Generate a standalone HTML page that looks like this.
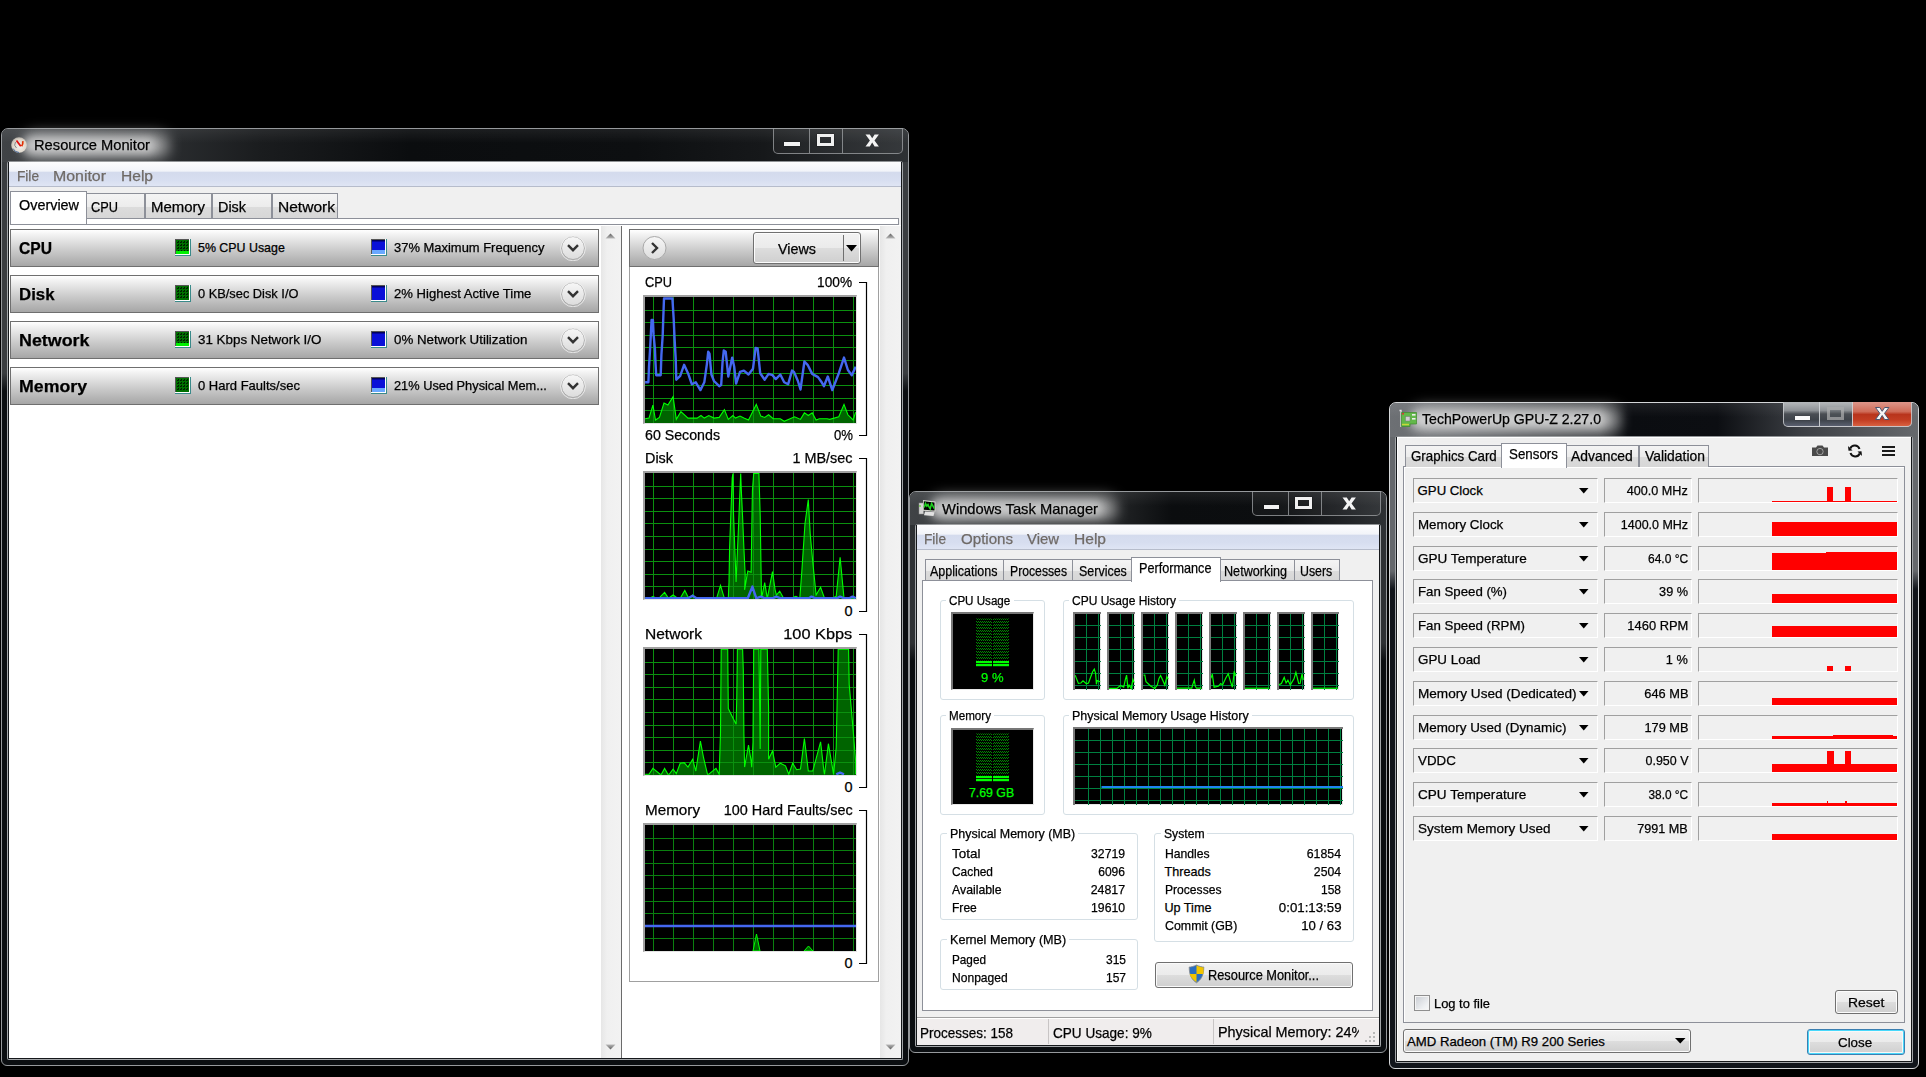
<!DOCTYPE html><html><head><meta charset="utf-8"><style>
html,body{margin:0;padding:0;background:#000;width:1926px;height:1077px;overflow:hidden;position:relative;font-family:"Liberation Sans",sans-serif}
body>div,body>span,body>svg{position:absolute;box-sizing:border-box}
.t{position:absolute;line-height:1;white-space:pre;-webkit-text-stroke:0.25px currentColor}
</style></head><body><div style="left:1px;top:128px;width:908px;height:938px;border:1px solid #96999c;border-radius:7px 7px 6px 6px;background:linear-gradient(180deg,#3a3d40 0px,#3a3d40 244px,#0b0e11 262px,#0b0e11 100%)"></div>
<div style="left:2px;top:129px;width:906px;height:33px;border-radius:6px 6px 0 0;background:linear-gradient(90deg,#404346 0px,#383b3e 80px,#1a1c1e 260px,#0b0d0f 45%,#0d0f11 70%,#16181a 84%,#2e3134 100%)"></div>
<div style="left:2px;top:129px;width:906px;height:33px;border-radius:6px 6px 0 0;background:linear-gradient(180deg,rgba(255,255,255,.07) 0px,rgba(0,0,0,0) 14px,rgba(0,0,0,0) 100%)"></div>
<div style="left:7px;top:161px;width:896px;height:899px;border:1px solid #a3a6a9;border-top-color:#909396;border-radius:3px 3px 2px 2px"></div>
<div style="left:8px;top:162px;width:894px;height:897px;border:1px solid #15181b;border-top:none;background:#f0f0f0"></div>
<div style="left:23px;top:133px;width:146px;height:25px;border-radius:12px;background:rgba(225,225,225,.62);filter:blur(7px)"></div>
<div style="left:23px;top:137px;width:132px;height:17px;border-radius:8px;background:rgba(235,235,235,.55);filter:blur(4px)"></div>
<svg style="position:absolute;left:10px;top:136px;" width="18" height="18" viewBox="0 0 18 18"><defs><radialGradient id="rmg" cx="55%" cy="60%" r="60%"><stop offset="0" stop-color="#f4f2ee"/><stop offset=".75" stop-color="#ddd5c8"/><stop offset="1" stop-color="#b9b4ac"/></radialGradient></defs><circle cx="9" cy="9" r="7.8" fill="url(#rmg)"/><path d="M3 12.5 A7 7 0 0 0 9 16.5" fill="none" stroke="#4a6a9a" stroke-width="1"/><path d="M5.5 6 A4.5 4.5 0 0 0 6.5 12" fill="none" stroke="#8a8a8a" stroke-width="1"/><path d="M6.5 4.5 L10.8 10.2" stroke="#e01010" stroke-width="1.8"/><path d="M12.8 5.2 Q13.2 8 11.6 10.2" fill="none" stroke="#e03000" stroke-width="1.7"/></svg>
<span class="t" style="left:34px;top:138.23px;font-size:14.5px;color:#000;transform:scaleX(1.0137);transform-origin:0 0;">Resource Monitor</span>
<div style="left:773px;top:128px;width:130px;height:26px;border:1px solid rgba(160,163,166,.75);border-top:none;border-radius:0 0 5px 5px;background:rgba(255,255,255,.04)"></div>
<div style="left:809px;top:128px;width:1px;height:25px;background:rgba(160,163,166,.75)"></div>
<div style="left:842px;top:128px;width:1px;height:25px;background:rgba(160,163,166,.75)"></div>
<div style="left:784px;top:142px;width:16px;height:4px;background:#f2f2f2;box-shadow:0 0 1px #000"></div>
<div style="left:817px;top:134px;width:17px;height:12px;border:3px solid #f0f0f0;border-top-width:3px;box-shadow:0 0 1px #000"></div>
<svg style="position:absolute;left:865px;top:134px;" width="15" height="14" viewBox="0 0 15 14"><path d="M0.5 0.5 H4.8 L7.2 4.3 L9.6 0.5 H13.9 L9.5 6.4 L13.9 12.5 H9.6 L7.2 8.5 L4.8 12.5 H0.5 L4.9 6.4 Z" fill="#f4f4f4"/></svg>
<div style="left:9px;top:162px;width:892px;height:25px;background:linear-gradient(180deg,#fdfdfe 0px,#f2f4f9 9px,#d4dbed 10.5px,#d7def0 18px,#dfe5f4 24px)"></div>
<div style="left:9px;top:186px;width:892px;height:1px;background:#b6bccb"></div>
<span class="t" style="left:16.5px;top:168.73px;font-size:14.5px;color:#6f6a66;transform:scaleX(0.9416);transform-origin:0 0;">File</span>
<span class="t" style="left:53px;top:168.73px;font-size:14.5px;color:#6f6a66;transform:scaleX(1.0962);transform-origin:0 0;">Monitor</span>
<span class="t" style="left:120.5px;top:168.73px;font-size:14.5px;color:#6f6a66;transform:scaleX(1.0731);transform-origin:0 0;">Help</span>
<div style="left:86px;top:193px;width:59px;height:26px;border:1px solid #8d9099;border-bottom:none;background:linear-gradient(180deg,#f4f4f4 0,#ececec 50%,#dcdcdc 51%,#d6d6d6 100%)"></div>
<div style="left:145px;top:193px;width:67px;height:26px;border:1px solid #8d9099;border-bottom:none;background:linear-gradient(180deg,#f4f4f4 0,#ececec 50%,#dcdcdc 51%,#d6d6d6 100%)"></div>
<div style="left:212px;top:193px;width:60px;height:26px;border:1px solid #8d9099;border-bottom:none;background:linear-gradient(180deg,#f4f4f4 0,#ececec 50%,#dcdcdc 51%,#d6d6d6 100%)"></div>
<div style="left:272px;top:193px;width:66px;height:26px;border:1px solid #8d9099;border-bottom:none;background:linear-gradient(180deg,#f4f4f4 0,#ececec 50%,#dcdcdc 51%,#d6d6d6 100%)"></div>
<div style="left:10px;top:218px;width:889px;height:7px;border:1px solid #8d9099;background:#fff"></div>
<div style="left:10px;top:191px;width:77px;height:33px;border:1px solid #8d9099;border-bottom:none;background:#fff"></div>
<span class="t" style="left:18.5px;top:197.73px;font-size:14.5px;color:#000;transform:scaleX(0.9929);transform-origin:0 0;">Overview</span>
<span class="t" style="left:91px;top:199.73px;font-size:14.5px;color:#000;transform:scaleX(0.8820);transform-origin:0 0;">CPU</span>
<span class="t" style="left:151px;top:199.73px;font-size:14.5px;color:#000;transform:scaleX(1.0312);transform-origin:0 0;">Memory</span>
<span class="t" style="left:218px;top:199.73px;font-size:14.5px;color:#000;transform:scaleX(0.9932);transform-origin:0 0;">Disk</span>
<span class="t" style="left:277.5px;top:199.73px;font-size:14.5px;color:#000;transform:scaleX(1.0719);transform-origin:0 0;">Network</span>
<div style="left:9px;top:225px;width:892px;height:833px;background:#fff"></div>
<div style="left:601px;top:226px;width:20px;height:832px;background:linear-gradient(90deg,#e6e6e6 0,#f0f0f0 30%,#f2f2f2 100%)"></div>
<div style="left:621px;top:226px;width:1px;height:832px;background:#6b6b6b"></div>
<div style="left:880px;top:226px;width:21px;height:832px;background:linear-gradient(90deg,#e6e6e6 0,#f0f0f0 30%,#f2f2f2 100%)"></div>
<svg style="position:absolute;left:605px;top:233px;" width="11" height="6" viewBox="0 0 11 6"><defs><linearGradient id="ua" x1="0" y1="0" x2="0" y2="1"><stop offset="0" stop-color="#606060"/><stop offset="1" stop-color="#b8b8b8"/></linearGradient></defs><path d="M0.5 5.5 L5.5 0.5 L10.5 5.5 Z" fill="url(#ua)"/></svg>
<svg style="position:absolute;left:605px;top:1044px;" width="11" height="6" viewBox="0 0 11 6"><defs><linearGradient id="da" x1="0" y1="0" x2="0" y2="1"><stop offset="0" stop-color="#b8b8b8"/><stop offset="1" stop-color="#606060"/></linearGradient></defs><path d="M0.5 0.5 L5.5 5.5 L10.5 0.5 Z" fill="url(#da)"/></svg>
<svg style="position:absolute;left:885px;top:233px;" width="11" height="6" viewBox="0 0 11 6"><defs><linearGradient id="ua" x1="0" y1="0" x2="0" y2="1"><stop offset="0" stop-color="#606060"/><stop offset="1" stop-color="#b8b8b8"/></linearGradient></defs><path d="M0.5 5.5 L5.5 0.5 L10.5 5.5 Z" fill="url(#ua)"/></svg>
<svg style="position:absolute;left:885px;top:1044px;" width="11" height="6" viewBox="0 0 11 6"><defs><linearGradient id="da" x1="0" y1="0" x2="0" y2="1"><stop offset="0" stop-color="#b8b8b8"/><stop offset="1" stop-color="#606060"/></linearGradient></defs><path d="M0.5 0.5 L5.5 5.5 L10.5 0.5 Z" fill="url(#da)"/></svg>
<div style="left:10px;top:229px;width:589px;height:38px;border:1px solid #6f6f6f;background:linear-gradient(180deg,#ffffff 0px,#f4f4f4 4px,#c8c8c8 60%,#a6a6a6 100%)"></div>
<span class="t" style="left:18.5px;top:239.83px;font-size:16.5px;color:#000;font-weight:bold;transform:scaleX(0.9473);transform-origin:0 0;">CPU</span>
<svg style="position:absolute;left:175px;top:239px;" width="16" height="17" viewBox="0 0 16 17"><rect x="0" y="0" width="16" height="17" fill="#3a8a8a"/><rect x="0" y="0" width="15" height="16" fill="#fff"/><rect x="0" y="0" width="14" height="15" fill="#555"/><svg x="1" y="1" width="13" height="14"><rect width="13" height="14" fill="#007000"/><path d="M1 2.5H13" stroke="#001a00" stroke-width="1" stroke-dasharray="1.5 1.5"/><path d="M1 5.5H13" stroke="#001a00" stroke-width="1" stroke-dasharray="1.5 1.5"/><path d="M1 8.5H13" stroke="#001a00" stroke-width="1" stroke-dasharray="1.5 1.5"/><path d="M1 11.5H13" stroke="#001a00" stroke-width="1" stroke-dasharray="1.5 1.5"/><path d="M2.5 1V13" stroke="#001a00" stroke-width="1" stroke-dasharray="1.5 1.5"/><path d="M5.5 1V13" stroke="#001a00" stroke-width="1" stroke-dasharray="1.5 1.5"/><path d="M8.5 1V13" stroke="#001a00" stroke-width="1" stroke-dasharray="1.5 1.5"/><path d="M11.5 1V13" stroke="#001a00" stroke-width="1" stroke-dasharray="1.5 1.5"/><rect x="0" y="11" width="13" height="3" fill="#00f000"/></svg></svg>
<svg style="position:absolute;left:371px;top:239px;" width="16" height="17" viewBox="0 0 16 17"><rect x="0" y="0" width="16" height="17" fill="#3a8a8a"/><rect x="0" y="0" width="15" height="16" fill="#fff"/><rect x="0" y="0" width="14" height="15" fill="#555"/><svg x="1" y="1" width="13" height="14"><rect width="13" height="14" fill="#0a10d8"/><rect x="0" y="0" width="13" height="1.5" fill="#000060"/><rect x="0" y="10" width="13" height="4" fill="#6aa8ff"/></svg></svg>
<span class="t" style="left:198px;top:242.10px;font-size:12.4px;color:#000;transform-origin:0 0;">5% CPU Usage</span>
<span class="t" style="left:393.5px;top:242.10px;font-size:12.4px;color:#000;transform:scaleX(1.0449);transform-origin:0 0;">37% Maximum Frequency</span>
<svg style="position:absolute;left:560px;top:235px;" width="26" height="26" viewBox="0 0 26 26"><defs><linearGradient id="chg0" x1="0" y1="0" x2="0" y2="1"><stop offset="0" stop-color="#f7f7f7"/><stop offset="1" stop-color="#dcdcdc"/></linearGradient></defs><circle cx="13" cy="13" r="11.5" fill="url(#chg0)" stroke="#a9a9a9" stroke-width="1"/><circle cx="13" cy="13.5" r="12.3" fill="none" stroke="#fff" stroke-width=".8" opacity=".8"/><path d="M8 10.2 L13 15.2 L18 10.2" fill="none" stroke="#333" stroke-width="2.4"/></svg>
<div style="left:10px;top:275px;width:589px;height:38px;border:1px solid #6f6f6f;background:linear-gradient(180deg,#ffffff 0px,#f4f4f4 4px,#c8c8c8 60%,#a6a6a6 100%)"></div>
<span class="t" style="left:18.5px;top:285.83px;font-size:16.5px;color:#000;font-weight:bold;transform:scaleX(1.0186);transform-origin:0 0;">Disk</span>
<svg style="position:absolute;left:175px;top:285px;" width="16" height="17" viewBox="0 0 16 17"><rect x="0" y="0" width="16" height="17" fill="#3a8a8a"/><rect x="0" y="0" width="15" height="16" fill="#fff"/><rect x="0" y="0" width="14" height="15" fill="#555"/><svg x="1" y="1" width="13" height="14"><rect width="13" height="14" fill="#007000"/><path d="M1 2.5H13" stroke="#001a00" stroke-width="1" stroke-dasharray="1.5 1.5"/><path d="M1 5.5H13" stroke="#001a00" stroke-width="1" stroke-dasharray="1.5 1.5"/><path d="M1 8.5H13" stroke="#001a00" stroke-width="1" stroke-dasharray="1.5 1.5"/><path d="M1 11.5H13" stroke="#001a00" stroke-width="1" stroke-dasharray="1.5 1.5"/><path d="M2.5 1V13" stroke="#001a00" stroke-width="1" stroke-dasharray="1.5 1.5"/><path d="M5.5 1V13" stroke="#001a00" stroke-width="1" stroke-dasharray="1.5 1.5"/><path d="M8.5 1V13" stroke="#001a00" stroke-width="1" stroke-dasharray="1.5 1.5"/><path d="M11.5 1V13" stroke="#001a00" stroke-width="1" stroke-dasharray="1.5 1.5"/></svg></svg>
<svg style="position:absolute;left:371px;top:285px;" width="16" height="17" viewBox="0 0 16 17"><rect x="0" y="0" width="16" height="17" fill="#3a8a8a"/><rect x="0" y="0" width="15" height="16" fill="#fff"/><rect x="0" y="0" width="14" height="15" fill="#555"/><svg x="1" y="1" width="13" height="14"><rect width="13" height="14" fill="#0a10d8"/><rect x="0" y="0" width="13" height="1.5" fill="#000060"/></svg></svg>
<span class="t" style="left:198px;top:288.10px;font-size:12.4px;color:#000;transform:scaleX(1.0344);transform-origin:0 0;">0 KB/sec Disk I/O</span>
<span class="t" style="left:393.5px;top:288.10px;font-size:12.4px;color:#000;transform:scaleX(1.0556);transform-origin:0 0;">2% Highest Active Time</span>
<svg style="position:absolute;left:560px;top:281px;" width="26" height="26" viewBox="0 0 26 26"><defs><linearGradient id="chg1" x1="0" y1="0" x2="0" y2="1"><stop offset="0" stop-color="#f7f7f7"/><stop offset="1" stop-color="#dcdcdc"/></linearGradient></defs><circle cx="13" cy="13" r="11.5" fill="url(#chg1)" stroke="#a9a9a9" stroke-width="1"/><circle cx="13" cy="13.5" r="12.3" fill="none" stroke="#fff" stroke-width=".8" opacity=".8"/><path d="M8 10.2 L13 15.2 L18 10.2" fill="none" stroke="#333" stroke-width="2.4"/></svg>
<div style="left:10px;top:321px;width:589px;height:38px;border:1px solid #6f6f6f;background:linear-gradient(180deg,#ffffff 0px,#f4f4f4 4px,#c8c8c8 60%,#a6a6a6 100%)"></div>
<span class="t" style="left:18.5px;top:331.83px;font-size:16.5px;color:#000;font-weight:bold;transform:scaleX(1.0830);transform-origin:0 0;">Network</span>
<svg style="position:absolute;left:175px;top:331px;" width="16" height="17" viewBox="0 0 16 17"><rect x="0" y="0" width="16" height="17" fill="#3a8a8a"/><rect x="0" y="0" width="15" height="16" fill="#fff"/><rect x="0" y="0" width="14" height="15" fill="#555"/><svg x="1" y="1" width="13" height="14"><rect width="13" height="14" fill="#007000"/><path d="M1 2.5H13" stroke="#001a00" stroke-width="1" stroke-dasharray="1.5 1.5"/><path d="M1 5.5H13" stroke="#001a00" stroke-width="1" stroke-dasharray="1.5 1.5"/><path d="M1 8.5H13" stroke="#001a00" stroke-width="1" stroke-dasharray="1.5 1.5"/><path d="M1 11.5H13" stroke="#001a00" stroke-width="1" stroke-dasharray="1.5 1.5"/><path d="M2.5 1V13" stroke="#001a00" stroke-width="1" stroke-dasharray="1.5 1.5"/><path d="M5.5 1V13" stroke="#001a00" stroke-width="1" stroke-dasharray="1.5 1.5"/><path d="M8.5 1V13" stroke="#001a00" stroke-width="1" stroke-dasharray="1.5 1.5"/><path d="M11.5 1V13" stroke="#001a00" stroke-width="1" stroke-dasharray="1.5 1.5"/><rect x="0" y="11" width="13" height="3" fill="#00f000"/></svg></svg>
<svg style="position:absolute;left:371px;top:331px;" width="16" height="17" viewBox="0 0 16 17"><rect x="0" y="0" width="16" height="17" fill="#3a8a8a"/><rect x="0" y="0" width="15" height="16" fill="#fff"/><rect x="0" y="0" width="14" height="15" fill="#555"/><svg x="1" y="1" width="13" height="14"><rect width="13" height="14" fill="#0a10d8"/><rect x="0" y="0" width="13" height="1.5" fill="#000060"/></svg></svg>
<span class="t" style="left:198px;top:334.10px;font-size:12.4px;color:#000;transform:scaleX(1.0795);transform-origin:0 0;">31 Kbps Network I/O</span>
<span class="t" style="left:393.5px;top:334.10px;font-size:12.4px;color:#000;transform:scaleX(1.0763);transform-origin:0 0;">0% Network Utilization</span>
<svg style="position:absolute;left:560px;top:327px;" width="26" height="26" viewBox="0 0 26 26"><defs><linearGradient id="chg2" x1="0" y1="0" x2="0" y2="1"><stop offset="0" stop-color="#f7f7f7"/><stop offset="1" stop-color="#dcdcdc"/></linearGradient></defs><circle cx="13" cy="13" r="11.5" fill="url(#chg2)" stroke="#a9a9a9" stroke-width="1"/><circle cx="13" cy="13.5" r="12.3" fill="none" stroke="#fff" stroke-width=".8" opacity=".8"/><path d="M8 10.2 L13 15.2 L18 10.2" fill="none" stroke="#333" stroke-width="2.4"/></svg>
<div style="left:10px;top:367px;width:589px;height:38px;border:1px solid #6f6f6f;background:linear-gradient(180deg,#ffffff 0px,#f4f4f4 4px,#c8c8c8 60%,#a6a6a6 100%)"></div>
<span class="t" style="left:18.5px;top:377.83px;font-size:16.5px;color:#000;font-weight:bold;transform:scaleX(1.0748);transform-origin:0 0;">Memory</span>
<svg style="position:absolute;left:175px;top:377px;" width="16" height="17" viewBox="0 0 16 17"><rect x="0" y="0" width="16" height="17" fill="#3a8a8a"/><rect x="0" y="0" width="15" height="16" fill="#fff"/><rect x="0" y="0" width="14" height="15" fill="#555"/><svg x="1" y="1" width="13" height="14"><rect width="13" height="14" fill="#007000"/><path d="M1 2.5H13" stroke="#001a00" stroke-width="1" stroke-dasharray="1.5 1.5"/><path d="M1 5.5H13" stroke="#001a00" stroke-width="1" stroke-dasharray="1.5 1.5"/><path d="M1 8.5H13" stroke="#001a00" stroke-width="1" stroke-dasharray="1.5 1.5"/><path d="M1 11.5H13" stroke="#001a00" stroke-width="1" stroke-dasharray="1.5 1.5"/><path d="M2.5 1V13" stroke="#001a00" stroke-width="1" stroke-dasharray="1.5 1.5"/><path d="M5.5 1V13" stroke="#001a00" stroke-width="1" stroke-dasharray="1.5 1.5"/><path d="M8.5 1V13" stroke="#001a00" stroke-width="1" stroke-dasharray="1.5 1.5"/><path d="M11.5 1V13" stroke="#001a00" stroke-width="1" stroke-dasharray="1.5 1.5"/></svg></svg>
<svg style="position:absolute;left:371px;top:377px;" width="16" height="17" viewBox="0 0 16 17"><rect x="0" y="0" width="16" height="17" fill="#3a8a8a"/><rect x="0" y="0" width="15" height="16" fill="#fff"/><rect x="0" y="0" width="14" height="15" fill="#555"/><svg x="1" y="1" width="13" height="14"><rect width="13" height="14" fill="#0a10d8"/><rect x="0" y="0" width="13" height="1.5" fill="#000060"/><rect x="0" y="10" width="13" height="4" fill="#6aa8ff"/></svg></svg>
<span class="t" style="left:198px;top:380.10px;font-size:12.4px;color:#000;transform:scaleX(1.0497);transform-origin:0 0;">0 Hard Faults/sec</span>
<span class="t" style="left:393.5px;top:380.10px;font-size:12.4px;color:#000;transform:scaleX(1.0326);transform-origin:0 0;">21% Used Physical Mem...</span>
<svg style="position:absolute;left:560px;top:373px;" width="26" height="26" viewBox="0 0 26 26"><defs><linearGradient id="chg3" x1="0" y1="0" x2="0" y2="1"><stop offset="0" stop-color="#f7f7f7"/><stop offset="1" stop-color="#dcdcdc"/></linearGradient></defs><circle cx="13" cy="13" r="11.5" fill="url(#chg3)" stroke="#a9a9a9" stroke-width="1"/><circle cx="13" cy="13.5" r="12.3" fill="none" stroke="#fff" stroke-width=".8" opacity=".8"/><path d="M8 10.2 L13 15.2 L18 10.2" fill="none" stroke="#333" stroke-width="2.4"/></svg>
<div style="left:629px;top:229px;width:250px;height:38px;border:1px solid #6f6f6f;background:linear-gradient(180deg,#ffffff 0px,#f4f4f4 4px,#c8c8c8 60%,#a6a6a6 100%)"></div>
<svg style="position:absolute;left:641px;top:235px;" width="27" height="27" viewBox="0 0 27 27"><defs><linearGradient id="chx" x1="0" y1="0" x2="0" y2="1"><stop offset="0" stop-color="#f7f7f7"/><stop offset="1" stop-color="#dcdcdc"/></linearGradient></defs><circle cx="13.5" cy="13" r="11.5" fill="url(#chx)" stroke="#a9a9a9"/><path d="M11 8 L16 13 L11 18" fill="none" stroke="#333" stroke-width="2.4"/></svg>
<div style="left:753px;top:232px;width:108px;height:32px;border:1px solid #707070;border-radius:3px;background:linear-gradient(180deg,#f2f2f2 0,#ebebeb 50%,#dddddd 51%,#cfcfcf 100%);box-shadow:inset 0 0 0 1px #fcfcfc"></div>
<div style="left:843px;top:235px;width:1px;height:26px;background:#6f6f6f"></div>
<span class="t" style="left:778px;top:241.73px;font-size:14.5px;color:#000;transform:scaleX(0.9892);transform-origin:0 0;">Views</span>
<svg style="position:absolute;left:846px;top:245px;" width="12" height="7" viewBox="0 0 12 7"><path d="M0 0 H11 L5.5 6.5 Z" fill="#000"/></svg>
<div style="left:629px;top:267px;width:250px;height:715px;border:1px solid #a0a0a0;border-top:none;background:#fff"></div>
<span class="t" style="left:645px;top:275.43px;font-size:14.5px;color:#000;transform:scaleX(0.8820);transform-origin:0 0;">CPU</span>
<span class="t" style="right:1073.5px;top:275.43px;font-size:14.5px;color:#000;transform:scaleX(0.9438);transform-origin:100% 0;">100%</span>
<span class="t" style="left:645px;top:428.13px;font-size:14.5px;color:#000;transform:scaleX(0.9793);transform-origin:0 0;">60 Seconds</span>
<span class="t" style="right:1073.5px;top:428.13px;font-size:14.5px;color:#000;transform:scaleX(0.9066);transform-origin:100% 0;">0%</span>
<svg style="position:absolute;left:858px;top:281px;" width="10" height="160" viewBox="0 0 10 160"><path d="M1 1.5 H8.5 V154.5 H1" fill="none" stroke="#000" stroke-width="1.2"/></svg>
<div style="left:643px;top:295px;width:214px;height:129px;border-top:2px solid #a0a0a0;border-left:2px solid #a0a0a0;border-right:1px solid #e4e4e4;border-bottom:1px solid #e4e4e4;background:#000"></div>
<svg style="position:absolute;left:645px;top:297px;" width="211" height="126" viewBox="0 0 211 126"><path d="M8.5 0V126M28.5 0V126M48.5 0V126M68.5 0V126M88.5 0V126M108.5 0V126M128.5 0V126M148.5 0V126M168.5 0V126M188.5 0V126M208.5 0V126M0 13.5H211M0 25.5H211M0 38.5H211M0 50.5H211M0 63.5H211M0 76.5H211M0 88.5H211M0 101.5H211M0 113.5H211" stroke="#0a800f" stroke-width="1" fill="none" shape-rendering="crispEdges"/><polygon points="0.1,126.0 0.1,121.7 4.0,121.1 7.9,108.1 10.5,123.0 14.4,120.4 19.0,106.1 22.9,108.1 28.1,99.6 31.3,122.4 35.9,114.6 43.0,121.1 52.1,121.1 56.0,118.5 59.3,121.1 63.8,118.5 69.0,121.1 74.2,120.4 79.4,112.6 83.3,122.4 87.9,118.5 90.5,121.1 95.0,119.1 98.9,121.1 103.5,123.0 111.3,107.4 115.8,119.1 119.7,120.4 123.6,117.8 128.2,121.7 135.3,121.7 139.2,124.3 149.6,119.8 155.5,122.4 159.4,115.9 163.3,118.5 167.2,115.9 171.1,123.0 174.3,121.7 182.1,121.7 184.7,122.4 193.8,119.8 199.0,107.4 202.9,117.8 208.1,123.0 210.7,115.2 210.7,126.0" fill="#006400"/><path d="M8.5 0V126M28.5 0V126M48.5 0V126M68.5 0V126M88.5 0V126M108.5 0V126M128.5 0V126M148.5 0V126M168.5 0V126M188.5 0V126M208.5 0V126M0 13.5H211M0 25.5H211M0 38.5H211M0 50.5H211M0 63.5H211M0 76.5H211M0 88.5H211M0 101.5H211M0 113.5H211" stroke="#0b900f" stroke-width="1" fill="none" shape-rendering="crispEdges"/><polyline points="0.1,121.7 4.0,121.1 7.9,108.1 10.5,123.0 14.4,120.4 19.0,106.1 22.9,108.1 28.1,99.6 31.3,122.4 35.9,114.6 43.0,121.1 52.1,121.1 56.0,118.5 59.3,121.1 63.8,118.5 69.0,121.1 74.2,120.4 79.4,112.6 83.3,122.4 87.9,118.5 90.5,121.1 95.0,119.1 98.9,121.1 103.5,123.0 111.3,107.4 115.8,119.1 119.7,120.4 123.6,117.8 128.2,121.7 135.3,121.7 139.2,124.3 149.6,119.8 155.5,122.4 159.4,115.9 163.3,118.5 167.2,115.9 171.1,123.0 174.3,121.7 182.1,121.7 184.7,122.4 193.8,119.8 199.0,107.4 202.9,117.8 208.1,123.0 210.7,115.2" fill="none" stroke="#00ff00" stroke-width="1.1"/><polyline points="0.1,85.3 3.4,85.3 4.0,69.7 5.0,53.5 6.6,22.9 7.9,22.9 8.6,37.9 9.9,51.5 10.5,65.8 11.2,78.2 15.7,78.2 16.4,58.0 17.7,38.5 18.3,20.3 19.0,1.5 27.4,1.5 28.7,22.3 29.6,42.4 30.7,61.9 31.3,82.7 35.2,78.8 39.1,67.8 43.0,76.2 46.9,87.3 50.8,85.3 55.4,93.1 59.3,85.3 61.9,67.1 63.2,54.8 64.5,56.7 66.4,77.5 69.0,84.0 74.2,89.2 76.2,87.9 77.5,65.8 78.8,53.5 80.7,54.8 83.3,79.5 87.2,60.6 89.2,69.7 91.1,86.6 95.0,74.9 98.9,73.6 103.5,77.5 108.0,71.7 110.6,50.9 112.6,51.5 115.2,76.2 119.7,82.7 123.6,76.9 127.5,78.2 130.8,82.1 135.3,77.5 139.2,85.3 143.1,87.3 147.0,73.6 149.0,74.9 152.9,84.0 155.5,92.5 159.4,64.5 162.6,67.8 167.2,76.9 173.0,80.1 176.3,84.7 178.9,89.2 182.8,79.5 187.3,93.1 193.8,76.2 199.0,60.6 202.9,73.0 206.8,78.2 210.7,69.7" fill="none" stroke="#4468f0" stroke-width="2.4" stroke-linejoin="round"/></svg>
<span class="t" style="left:645px;top:451.43px;font-size:14.5px;color:#000;transform:scaleX(0.9932);transform-origin:0 0;">Disk</span>
<span class="t" style="right:1073.5px;top:451.43px;font-size:14.5px;color:#000;transform:scaleX(0.9928);transform-origin:100% 0;">1 MB/sec</span>
<span class="t" style="right:1073.5px;top:604.13px;font-size:14.5px;color:#000;transform-origin:100% 0;">0</span>
<svg style="position:absolute;left:858px;top:457px;" width="10" height="160" viewBox="0 0 10 160"><path d="M1 1.5 H8.5 V154.5 H1" fill="none" stroke="#000" stroke-width="1.2"/></svg>
<div style="left:643px;top:471px;width:214px;height:129px;border-top:2px solid #a0a0a0;border-left:2px solid #a0a0a0;border-right:1px solid #e4e4e4;border-bottom:1px solid #e4e4e4;background:#000"></div>
<svg style="position:absolute;left:645px;top:473px;" width="211" height="126" viewBox="0 0 211 126"><path d="M8.5 0V126M28.5 0V126M48.5 0V126M68.5 0V126M88.5 0V126M108.5 0V126M128.5 0V126M148.5 0V126M168.5 0V126M188.5 0V126M208.5 0V126M0 13.5H211M0 25.5H211M0 38.5H211M0 50.5H211M0 63.5H211M0 76.5H211M0 88.5H211M0 101.5H211M0 113.5H211" stroke="#0a800f" stroke-width="1" fill="none" shape-rendering="crispEdges"/><polygon points="0.1,126.0 0.1,125.3 4.0,125.3 7.9,123.6 11.8,125.3 13.8,125.3 19.6,119.4 23.5,125.3 28.1,122.0 32.6,125.3 35.2,125.3 39.8,117.5 43.7,125.3 47.6,122.0 51.5,125.3 71.6,125.3 75.5,112.3 79.4,125.3 83.3,125.3 84.0,109.0 84.6,75.2 85.9,40.1 87.2,5.0 87.9,0.5 88.5,40.1 89.8,75.2 91.1,109.0 92.4,79.1 93.7,49.2 95.0,16.7 95.7,0.5 96.3,16.7 97.6,44.0 98.9,75.2 100.2,102.5 99.6,116.8 102.8,98.0 106.1,99.3 107.4,18.0 108.7,0.5 113.9,0.5 115.2,42.7 116.5,125.3 119.7,109.7 122.3,125.3 127.5,98.6 130.1,116.8 131.4,122.0 134.7,118.1 138.6,125.3 145.7,125.3 150.9,123.3 154.8,125.3 156.8,98.6 160.0,50.5 163.3,26.5 165.2,60.9 167.2,83.0 171.1,122.0 175.6,114.2 179.5,125.3 187.3,125.3 191.2,123.3 195.1,84.3 197.7,111.6 199.0,125.3 210.7,125.3 210.7,126.0" fill="#006400"/><path d="M8.5 0V126M28.5 0V126M48.5 0V126M68.5 0V126M88.5 0V126M108.5 0V126M128.5 0V126M148.5 0V126M168.5 0V126M188.5 0V126M208.5 0V126M0 13.5H211M0 25.5H211M0 38.5H211M0 50.5H211M0 63.5H211M0 76.5H211M0 88.5H211M0 101.5H211M0 113.5H211" stroke="#0b900f" stroke-width="1" fill="none" shape-rendering="crispEdges"/><polyline points="0.1,125.3 4.0,125.3 7.9,123.6 11.8,125.3 13.8,125.3 19.6,119.4 23.5,125.3 28.1,122.0 32.6,125.3 35.2,125.3 39.8,117.5 43.7,125.3 47.6,122.0 51.5,125.3 71.6,125.3 75.5,112.3 79.4,125.3 83.3,125.3 84.0,109.0 84.6,75.2 85.9,40.1 87.2,5.0 87.9,0.5 88.5,40.1 89.8,75.2 91.1,109.0 92.4,79.1 93.7,49.2 95.0,16.7 95.7,0.5 96.3,16.7 97.6,44.0 98.9,75.2 100.2,102.5 99.6,116.8 102.8,98.0 106.1,99.3 107.4,18.0 108.7,0.5 113.9,0.5 115.2,42.7 116.5,125.3 119.7,109.7 122.3,125.3 127.5,98.6 130.1,116.8 131.4,122.0 134.7,118.1 138.6,125.3 145.7,125.3 150.9,123.3 154.8,125.3 156.8,98.6 160.0,50.5 163.3,26.5 165.2,60.9 167.2,83.0 171.1,122.0 175.6,114.2 179.5,125.3 187.3,125.3 191.2,123.3 195.1,84.3 197.7,111.6 199.0,125.3 210.7,125.3" fill="none" stroke="#00ff00" stroke-width="1.1"/><polyline points="0.1,125.3 43.0,125.3 47.6,122.7 51.5,125.3 102.8,125.3 107.4,113.6 111.3,125.3 115.8,123.6 119.7,125.3 127.5,125.3 131.4,123.6 135.3,125.3 163.9,125.3 166.5,123.6 170.4,125.3 191.9,125.3 195.1,123.6 199.0,125.3 204.2,125.3 207.5,123.6 210.7,125.3" fill="none" stroke="#4468f0" stroke-width="2.4" stroke-linejoin="round"/></svg>
<span class="t" style="left:645px;top:627.43px;font-size:14.5px;color:#000;transform:scaleX(1.0719);transform-origin:0 0;">Network</span>
<span class="t" style="right:1073.5px;top:627.43px;font-size:14.5px;color:#000;transform:scaleX(1.1262);transform-origin:100% 0;">100 Kbps</span>
<span class="t" style="right:1073.5px;top:780.13px;font-size:14.5px;color:#000;transform-origin:100% 0;">0</span>
<svg style="position:absolute;left:858px;top:633px;" width="10" height="160" viewBox="0 0 10 160"><path d="M1 1.5 H8.5 V154.5 H1" fill="none" stroke="#000" stroke-width="1.2"/></svg>
<div style="left:643px;top:647px;width:214px;height:129px;border-top:2px solid #a0a0a0;border-left:2px solid #a0a0a0;border-right:1px solid #e4e4e4;border-bottom:1px solid #e4e4e4;background:#000"></div>
<svg style="position:absolute;left:645px;top:649px;" width="211" height="126" viewBox="0 0 211 126"><path d="M8.5 0V126M28.5 0V126M48.5 0V126M68.5 0V126M88.5 0V126M108.5 0V126M128.5 0V126M148.5 0V126M168.5 0V126M188.5 0V126M208.5 0V126M0 13.5H211M0 25.5H211M0 38.5H211M0 50.5H211M0 63.5H211M0 76.5H211M0 88.5H211M0 101.5H211M0 113.5H211" stroke="#0a800f" stroke-width="1" fill="none" shape-rendering="crispEdges"/><polygon points="0.1,126.0 0.1,125.3 4.0,125.3 7.9,119.4 15.1,125.3 16.4,125.3 19.6,119.4 22.9,125.3 24.2,125.3 28.1,120.1 31.3,124.6 35.2,114.2 39.1,113.6 43.0,118.1 47.6,110.3 50.8,122.0 55.4,92.1 58.6,109.0 62.5,125.3 63.8,125.3 71.0,119.4 74.2,125.3 75.5,84.3 76.2,0.1 82.7,0.1 83.3,59.6 87.2,67.4 91.1,75.2 91.8,47.9 92.4,0.1 97.6,0.1 98.3,21.3 98.9,85.6 99.6,118.1 103.5,96.0 106.1,111.6 106.7,118.1 108.0,93.4 108.7,0.1 113.9,0.1 114.5,44.0 115.2,99.9 115.8,0.1 122.3,0.1 123.6,59.6 123.6,110.3 127.5,101.9 130.8,118.1 135.3,114.2 140.5,116.8 143.8,125.3 147.7,114.2 151.6,120.7 155.5,120.1 159.4,89.5 163.3,122.0 167.8,122.0 175.6,92.8 178.9,122.0 179.5,125.3 183.4,94.7 188.6,125.3 191.2,98.6 193.2,0.1 203.6,0.1 204.2,35.6 208.1,80.4 210.7,112.9 210.7,125.3 210.7,126.0" fill="#006400"/><path d="M8.5 0V126M28.5 0V126M48.5 0V126M68.5 0V126M88.5 0V126M108.5 0V126M128.5 0V126M148.5 0V126M168.5 0V126M188.5 0V126M208.5 0V126M0 13.5H211M0 25.5H211M0 38.5H211M0 50.5H211M0 63.5H211M0 76.5H211M0 88.5H211M0 101.5H211M0 113.5H211" stroke="#0b900f" stroke-width="1" fill="none" shape-rendering="crispEdges"/><polyline points="0.1,125.3 4.0,125.3 7.9,119.4 15.1,125.3 16.4,125.3 19.6,119.4 22.9,125.3 24.2,125.3 28.1,120.1 31.3,124.6 35.2,114.2 39.1,113.6 43.0,118.1 47.6,110.3 50.8,122.0 55.4,92.1 58.6,109.0 62.5,125.3 63.8,125.3 71.0,119.4 74.2,125.3 75.5,84.3 76.2,0.1 82.7,0.1 83.3,59.6 87.2,67.4 91.1,75.2 91.8,47.9 92.4,0.1 97.6,0.1 98.3,21.3 98.9,85.6 99.6,118.1 103.5,96.0 106.1,111.6 106.7,118.1 108.0,93.4 108.7,0.1 113.9,0.1 114.5,44.0 115.2,99.9 115.8,0.1 122.3,0.1 123.6,59.6 123.6,110.3 127.5,101.9 130.8,118.1 135.3,114.2 140.5,116.8 143.8,125.3 147.7,114.2 151.6,120.7 155.5,120.1 159.4,89.5 163.3,122.0 167.8,122.0 175.6,92.8 178.9,122.0 179.5,125.3 183.4,94.7 188.6,125.3 191.2,98.6 193.2,0.1 203.6,0.1 204.2,35.6 208.1,80.4 210.7,112.9 210.7,125.3" fill="none" stroke="#00ff00" stroke-width="1.1"/><polyline points="191.2,125.3 195.1,123.6 199.0,125.3" fill="none" stroke="#4468f0" stroke-width="2.4" stroke-linejoin="round"/></svg>
<span class="t" style="left:645px;top:803.43px;font-size:14.5px;color:#000;transform:scaleX(1.0503);transform-origin:0 0;">Memory</span>
<span class="t" style="right:1073.5px;top:803.43px;font-size:14.5px;color:#000;transform:scaleX(0.9942);transform-origin:100% 0;">100 Hard Faults/sec</span>
<span class="t" style="right:1073.5px;top:956.13px;font-size:14.5px;color:#000;transform-origin:100% 0;">0</span>
<svg style="position:absolute;left:858px;top:809px;" width="10" height="160" viewBox="0 0 10 160"><path d="M1 1.5 H8.5 V154.5 H1" fill="none" stroke="#000" stroke-width="1.2"/></svg>
<div style="left:643px;top:823px;width:214px;height:129px;border-top:2px solid #a0a0a0;border-left:2px solid #a0a0a0;border-right:1px solid #e4e4e4;border-bottom:1px solid #e4e4e4;background:#000"></div>
<svg style="position:absolute;left:645px;top:825px;" width="211" height="126" viewBox="0 0 211 126"><path d="M8.5 0V126M28.5 0V126M48.5 0V126M68.5 0V126M88.5 0V126M108.5 0V126M128.5 0V126M148.5 0V126M168.5 0V126M188.5 0V126M208.5 0V126M0 13.5H211M0 25.5H211M0 38.5H211M0 50.5H211M0 63.5H211M0 76.5H211M0 88.5H211M0 101.5H211M0 113.5H211" stroke="#0a800f" stroke-width="1" fill="none" shape-rendering="crispEdges"/></svg>
<svg style="position:absolute;left:645px;top:825px;" width="211" height="126" viewBox="0 0 211 126"><path d="M0 101 H211" stroke="#4468f0" stroke-width="2.4"/><polygon points="108,126 111.5,109 115,126" fill="#006400" stroke="#00ff00" stroke-width="1"/><polygon points="159,126 163.5,121 168,126" fill="#006400" stroke="#00ff00" stroke-width="1"/></svg>
<div style="left:909px;top:491px;width:478px;height:562px;border:1px solid #96999c;border-radius:7px 7px 6px 6px;background:linear-gradient(180deg,#2e3134 0px,#2e3134 151px,#0b0e11 169px,#0b0e11 100%)"></div>
<div style="left:910px;top:492px;width:476px;height:33px;border-radius:6px 6px 0 0;background:linear-gradient(90deg,#404346 0px,#35383b 60px,#1c1e20 220px,#0b0d0f 55%,#0c0e10 78%,#1e2023 90%,#2e3134 100%)"></div>
<div style="left:910px;top:492px;width:476px;height:33px;border-radius:6px 6px 0 0;background:linear-gradient(180deg,rgba(255,255,255,.07) 0px,rgba(0,0,0,0) 14px,rgba(0,0,0,0) 100%)"></div>
<div style="left:915px;top:524px;width:466px;height:523px;border:1px solid #a3a6a9;border-top-color:#909396;border-radius:3px 3px 2px 2px"></div>
<div style="left:916px;top:525px;width:464px;height:521px;border:1px solid #15181b;border-top:none;background:#f0f0f0"></div>
<div style="left:931px;top:496px;width:186px;height:25px;border-radius:12px;background:rgba(225,225,225,.62);filter:blur(7px)"></div>
<div style="left:931px;top:500px;width:172px;height:17px;border-radius:8px;background:rgba(235,235,235,.55);filter:blur(4px)"></div>
<svg style="position:absolute;left:918px;top:498px;" width="20" height="20" viewBox="0 0 20 20"><rect x="1" y="5" width="4.5" height="11" fill="#d4d4d4" stroke="#8a8a8a" stroke-width=".5"/><circle cx="2" cy="8" r=".9" fill="#6ad040"/><path d="M5 2 L17.5 3.5 V13.5 L5 12.8 Z" fill="#d6d6d0"/><path d="M5.8 3.3 L16.5 4.6 V12.4 L5.8 11.8 Z" fill="#000"/><path d="M6.2 9.5 L7.5 5.5 L8.8 8 L10 6.5 L11 9 L12.2 10.8 L13.6 5.6 L15 8.2 L16.3 10.5" fill="none" stroke="#20d020" stroke-width="1.6"/><path d="M7 13.5 L16.5 14.3 L15.5 18 L6 17.2 Z" fill="#e2e2e2"/></svg>
<span class="t" style="left:942px;top:501.93px;font-size:14.5px;color:#000;transform:scaleX(1.0152);transform-origin:0 0;">Windows Task Manager</span>
<div style="left:1252px;top:491px;width:129px;height:25px;border:1px solid rgba(160,163,166,.75);border-top:none;border-radius:0 0 5px 5px;background:rgba(255,255,255,.04)"></div>
<div style="left:1288px;top:491px;width:1px;height:24px;background:rgba(160,163,166,.75)"></div>
<div style="left:1321px;top:491px;width:1px;height:24px;background:rgba(160,163,166,.75)"></div>
<div style="left:1264px;top:505px;width:15px;height:4px;background:#f2f2f2;box-shadow:0 0 1px #000"></div>
<div style="left:1295px;top:497px;width:17px;height:12px;border:3px solid #f0f0f0;box-shadow:0 0 1px #000"></div>
<svg style="position:absolute;left:1342px;top:497px;" width="15" height="14" viewBox="0 0 15 14"><path d="M0.5 0.5 H4.8 L7.2 4.3 L9.6 0.5 H13.9 L9.5 6.4 L13.9 12.5 H9.6 L7.2 8.5 L4.8 12.5 H0.5 L4.9 6.4 Z" fill="#f4f4f4"/></svg>
<div style="left:917px;top:525px;width:462px;height:24px;background:linear-gradient(180deg,#fdfdfe 0px,#f2f4f9 9px,#d4dbed 10.5px,#d7def0 18px,#dfe5f4 24px)"></div>
<div style="left:917px;top:549px;width:462px;height:1px;background:#b6bccb"></div>
<span class="t" style="left:924px;top:532.43px;font-size:14.5px;color:#6f6a66;transform:scaleX(0.9416);transform-origin:0 0;">File</span>
<span class="t" style="left:961px;top:532.43px;font-size:14.5px;color:#6f6a66;transform:scaleX(1.0406);transform-origin:0 0;">Options</span>
<span class="t" style="left:1027px;top:532.43px;font-size:14.5px;color:#6f6a66;transform:scaleX(1.0268);transform-origin:0 0;">View</span>
<span class="t" style="left:1073.5px;top:532.43px;font-size:14.5px;color:#6f6a66;transform:scaleX(1.0731);transform-origin:0 0;">Help</span>
<div style="left:925px;top:559px;width:79px;height:22px;border:1px solid #8d9099;border-bottom:none;background:linear-gradient(180deg,#f4f4f4 0,#ececec 50%,#dcdcdc 51%,#d6d6d6 100%)"></div>
<span class="t" style="left:930.4px;top:563.73px;font-size:14.5px;color:#000;transform:scaleX(0.8621);transform-origin:0 0;">Applications</span>
<div style="left:1003px;top:559px;width:70px;height:22px;border:1px solid #8d9099;border-bottom:none;background:linear-gradient(180deg,#f4f4f4 0,#ececec 50%,#dcdcdc 51%,#d6d6d6 100%)"></div>
<span class="t" style="left:1010px;top:563.73px;font-size:14.5px;color:#000;transform:scaleX(0.8420);transform-origin:0 0;">Processes</span>
<div style="left:1072px;top:559px;width:61px;height:22px;border:1px solid #8d9099;border-bottom:none;background:linear-gradient(180deg,#f4f4f4 0,#ececec 50%,#dcdcdc 51%,#d6d6d6 100%)"></div>
<span class="t" style="left:1079.3px;top:563.73px;font-size:14.5px;color:#000;transform:scaleX(0.8597);transform-origin:0 0;">Services</span>
<div style="left:1220px;top:559px;width:75px;height:22px;border:1px solid #8d9099;border-bottom:none;background:linear-gradient(180deg,#f4f4f4 0,#ececec 50%,#dcdcdc 51%,#d6d6d6 100%)"></div>
<span class="t" style="left:1224.3px;top:563.73px;font-size:14.5px;color:#000;transform:scaleX(0.8700);transform-origin:0 0;">Networking</span>
<div style="left:1294px;top:559px;width:46px;height:22px;border:1px solid #8d9099;border-bottom:none;background:linear-gradient(180deg,#f4f4f4 0,#ececec 50%,#dcdcdc 51%,#d6d6d6 100%)"></div>
<span class="t" style="left:1300.2px;top:563.73px;font-size:14.5px;color:#000;transform:scaleX(0.8531);transform-origin:0 0;">Users</span>
<div style="left:922px;top:580px;width:451px;height:431px;border:1px solid #8d9099;background:#fff"></div>
<div style="left:1131px;top:557px;width:90px;height:25px;border:1px solid #8d9099;border-bottom:none;background:#fff"></div>
<span class="t" style="left:1139px;top:561.23px;font-size:14.5px;color:#000;transform:scaleX(0.8734);transform-origin:0 0;">Performance</span>
<div style="left:940px;top:600px;width:105px;height:100px;border:1px solid #d5dfe5;border-radius:3px"></div>
<div style="left:946.4px;top:598px;width:67.3px;height:5px;background:#fff"></div>
<span class="t" style="left:949.4px;top:595.09px;font-size:12.3px;color:#000;transform:scaleX(0.9439);transform-origin:0 0;">CPU Usage</span>
<div style="left:951px;top:612px;width:83px;height:78px;background:#000;border-top:2px solid #777;border-left:2px solid #777;border-right:1px solid #e8e8e8;border-bottom:1px solid #e8e8e8"></div>
<svg style="position:absolute;left:976px;top:618px;" width="34" height="49" viewBox="0 0 34 49"><defs><pattern id="dp" width="2" height="3" patternUnits="userSpaceOnUse"><rect x="0" y="0" width="1" height="1" fill="#008a00"/><rect x="1" y="1" width="1" height="1" fill="#008a00"/></pattern></defs><rect x="0" y="0.5" width="16" height="42" fill="url(#dp)"/><rect x="17" y="0.5" width="16" height="42" fill="url(#dp)"/><rect x="0" y="43" width="16" height="2.2" fill="#00ff00"/><rect x="17" y="43" width="16" height="2.2" fill="#00ff00"/><rect x="0" y="46" width="16" height="2.2" fill="#00ff00"/><rect x="17" y="46" width="16" height="2.2" fill="#00ff00"/></svg>
<span class="t" style="left:981px;top:671.89px;font-size:12.3px;color:#00ff00;transform:scaleX(1.0616);transform-origin:0 0;">9 %</span>
<div style="left:1063px;top:600px;width:291px;height:100px;border:1px solid #d5dfe5;border-radius:3px"></div>
<div style="left:1069.4px;top:598px;width:110px;height:5px;background:#fff"></div>
<span class="t" style="left:1072.4px;top:595.09px;font-size:12.3px;color:#000;transform:scaleX(0.9754);transform-origin:0 0;">CPU Usage History</span>
<div style="left:1073px;top:612px;width:28px;height:78px;background:#000;border-top:2px solid #777;border-left:2px solid #777;border-right:1px solid #e8e8e8;border-bottom:1px solid #e8e8e8"></div>
<svg style="position:absolute;left:1073px;top:612px;" width="28" height="78" viewBox="0 0 28 78"><path d="M13.5 0V78M25.5 0V78M0 13.5H28M0 25.5H28M0 37.5H28M0 49.5H28M0 61.5H28M0 73.5H28" stroke="#008040" stroke-width="1" fill="none"/><polyline points="2.1,63.1 5.4,71.4 7.9,71.0 10.0,68.9 13.4,71.8 15.5,71.0 19.6,59.7 21.3,57.2 22.6,61.4 23.4,72.3 24.2,68.5 27.2,69.8" fill="none" stroke="#00ff00" stroke-width="1.2"/></svg>
<div style="left:1073px;top:612px;width:28px;height:2px;background:#7a7a7a"></div>
<div style="left:1073px;top:612px;width:2px;height:78px;background:#7a7a7a"></div>
<div style="left:1107px;top:612px;width:28px;height:78px;background:#000;border-top:2px solid #777;border-left:2px solid #777;border-right:1px solid #e8e8e8;border-bottom:1px solid #e8e8e8"></div>
<svg style="position:absolute;left:1107px;top:612px;" width="28" height="78" viewBox="0 0 28 78"><path d="M13.5 0V78M25.5 0V78M0 13.5H28M0 25.5H28M0 37.5H28M0 49.5H28M0 61.5H28M0 73.5H28" stroke="#008040" stroke-width="1" fill="none"/><polyline points="2.1,76.4 10.0,76.4 13.4,73.5 16.7,75.2 18.4,67.3 19.6,63.1 20.9,76.4 22.1,73.1 24.2,76.4 25.9,67.3 27.2,70.6" fill="none" stroke="#00ff00" stroke-width="1.2"/></svg>
<div style="left:1107px;top:612px;width:28px;height:2px;background:#7a7a7a"></div>
<div style="left:1107px;top:612px;width:2px;height:78px;background:#7a7a7a"></div>
<div style="left:1141px;top:612px;width:28px;height:78px;background:#000;border-top:2px solid #777;border-left:2px solid #777;border-right:1px solid #e8e8e8;border-bottom:1px solid #e8e8e8"></div>
<svg style="position:absolute;left:1141px;top:612px;" width="28" height="78" viewBox="0 0 28 78"><path d="M13.5 0V78M25.5 0V78M0 13.5H28M0 25.5H28M0 37.5H28M0 49.5H28M0 61.5H28M0 73.5H28" stroke="#008040" stroke-width="1" fill="none"/><polyline points="2.5,63.1 3.8,63.1 5.0,69.8 9.6,73.9 13.8,76.4 16.3,73.1 18.0,66.4 19.6,63.5 21.3,67.3 23.8,73.1 25.9,64.7 27.2,67.3" fill="none" stroke="#00ff00" stroke-width="1.2"/></svg>
<div style="left:1141px;top:612px;width:28px;height:2px;background:#7a7a7a"></div>
<div style="left:1141px;top:612px;width:2px;height:78px;background:#7a7a7a"></div>
<div style="left:1175px;top:612px;width:28px;height:78px;background:#000;border-top:2px solid #777;border-left:2px solid #777;border-right:1px solid #e8e8e8;border-bottom:1px solid #e8e8e8"></div>
<svg style="position:absolute;left:1175px;top:612px;" width="28" height="78" viewBox="0 0 28 78"><path d="M13.5 0V78M25.5 0V78M0 13.5H28M0 25.5H28M0 37.5H28M0 49.5H28M0 61.5H28M0 73.5H28" stroke="#008040" stroke-width="1" fill="none"/><polyline points="1.9,76.2 16.8,76.2 17.8,72.4 19.3,68.2 20.3,74.3 21.5,76.2 26.6,76.2" fill="none" stroke="#00ff00" stroke-width="1.2"/></svg>
<div style="left:1175px;top:612px;width:28px;height:2px;background:#7a7a7a"></div>
<div style="left:1175px;top:612px;width:2px;height:78px;background:#7a7a7a"></div>
<div style="left:1209px;top:612px;width:28px;height:78px;background:#000;border-top:2px solid #777;border-left:2px solid #777;border-right:1px solid #e8e8e8;border-bottom:1px solid #e8e8e8"></div>
<svg style="position:absolute;left:1209px;top:612px;" width="28" height="78" viewBox="0 0 28 78"><path d="M13.5 0V78M25.5 0V78M0 13.5H28M0 25.5H28M0 37.5H28M0 49.5H28M0 61.5H28M0 73.5H28" stroke="#008040" stroke-width="1" fill="none"/><polyline points="1.9,66.4 3.3,62.1 5.1,75.2 9.3,74.3 11.7,71.5 13.6,72.9 16.8,65.9 19.2,61.7 21.5,69.6 23.4,75.2 24.8,63.6 25.2,59.3 26.6,64.0" fill="none" stroke="#00ff00" stroke-width="1.2"/></svg>
<div style="left:1209px;top:612px;width:28px;height:2px;background:#7a7a7a"></div>
<div style="left:1209px;top:612px;width:2px;height:78px;background:#7a7a7a"></div>
<div style="left:1243px;top:612px;width:28px;height:78px;background:#000;border-top:2px solid #777;border-left:2px solid #777;border-right:1px solid #e8e8e8;border-bottom:1px solid #e8e8e8"></div>
<svg style="position:absolute;left:1243px;top:612px;" width="28" height="78" viewBox="0 0 28 78"><path d="M13.5 0V78M25.5 0V78M0 13.5H28M0 25.5H28M0 37.5H28M0 49.5H28M0 61.5H28M0 73.5H28" stroke="#008040" stroke-width="1" fill="none"/><polyline points="1.4,76.2 26.4,76.2" fill="none" stroke="#00ff00" stroke-width="1.2"/></svg>
<div style="left:1243px;top:612px;width:28px;height:2px;background:#7a7a7a"></div>
<div style="left:1243px;top:612px;width:2px;height:78px;background:#7a7a7a"></div>
<div style="left:1277px;top:612px;width:28px;height:78px;background:#000;border-top:2px solid #777;border-left:2px solid #777;border-right:1px solid #e8e8e8;border-bottom:1px solid #e8e8e8"></div>
<svg style="position:absolute;left:1277px;top:612px;" width="28" height="78" viewBox="0 0 28 78"><path d="M13.5 0V78M25.5 0V78M0 13.5H28M0 25.5H28M0 37.5H28M0 49.5H28M0 61.5H28M0 73.5H28" stroke="#008040" stroke-width="1" fill="none"/><polyline points="1.6,72.9 4.4,71.5 7.2,65.4 9.1,71.0 10.9,68.2 13.3,72.9 17.0,66.8 18.9,60.3 21.7,71.5 23.1,71.5 25.0,62.1 26.4,67.8" fill="none" stroke="#00ff00" stroke-width="1.2"/></svg>
<div style="left:1277px;top:612px;width:28px;height:2px;background:#7a7a7a"></div>
<div style="left:1277px;top:612px;width:2px;height:78px;background:#7a7a7a"></div>
<div style="left:1311px;top:612px;width:28px;height:78px;background:#000;border-top:2px solid #777;border-left:2px solid #777;border-right:1px solid #e8e8e8;border-bottom:1px solid #e8e8e8"></div>
<svg style="position:absolute;left:1311px;top:612px;" width="28" height="78" viewBox="0 0 28 78"><path d="M13.5 0V78M25.5 0V78M0 13.5H28M0 25.5H28M0 37.5H28M0 49.5H28M0 61.5H28M0 73.5H28" stroke="#008040" stroke-width="1" fill="none"/><polyline points="1.7,76.2 26.9,76.2" fill="none" stroke="#00ff00" stroke-width="1.2"/></svg>
<div style="left:1311px;top:612px;width:28px;height:2px;background:#7a7a7a"></div>
<div style="left:1311px;top:612px;width:2px;height:78px;background:#7a7a7a"></div>
<div style="left:940px;top:715px;width:105px;height:100px;border:1px solid #d5dfe5;border-radius:3px"></div>
<div style="left:945.8px;top:713px;width:48px;height:5px;background:#fff"></div>
<span class="t" style="left:948.8px;top:710.29px;font-size:12.3px;color:#000;transform:scaleX(0.9455);transform-origin:0 0;">Memory</span>
<div style="left:951px;top:728px;width:83px;height:77px;background:#000;border-top:2px solid #777;border-left:2px solid #777;border-right:1px solid #e8e8e8;border-bottom:1px solid #e8e8e8"></div>
<svg style="position:absolute;left:976px;top:733px;" width="34" height="49" viewBox="0 0 34 49"><defs><pattern id="dp2" width="2" height="3" patternUnits="userSpaceOnUse"><rect x="0" y="0" width="1" height="1" fill="#008a00"/><rect x="1" y="1" width="1" height="1" fill="#008a00"/></pattern></defs><rect x="0" y="0.5" width="16" height="42" fill="url(#dp2)"/><rect x="17" y="0.5" width="16" height="42" fill="url(#dp2)"/><rect x="0" y="43" width="16" height="2.2" fill="#00ff00"/><rect x="17" y="43" width="16" height="2.2" fill="#00ff00"/><rect x="0" y="46" width="16" height="2.2" fill="#00ff00"/><rect x="17" y="46" width="16" height="2.2" fill="#00ff00"/></svg>
<span class="t" style="left:969px;top:786.59px;font-size:12.3px;color:#00ff00;transform-origin:0 0;">7.69 GB</span>
<div style="left:1063px;top:715px;width:291px;height:100px;border:1px solid #d5dfe5;border-radius:3px"></div>
<div style="left:1069.1px;top:713px;width:182.7px;height:5px;background:#fff"></div>
<span class="t" style="left:1072.1px;top:710.09px;font-size:12.3px;color:#000;transform:scaleX(1.0138);transform-origin:0 0;">Physical Memory Usage History</span>
<div style="left:1073px;top:727px;width:270px;height:78px;background:#000;border-top:2px solid #777;border-left:2px solid #777;border-right:1px solid #e8e8e8;border-bottom:1px solid #e8e8e8"></div>
<svg style="position:absolute;left:1073px;top:727px;" width="270" height="78" viewBox="0 0 270 78"><path d="M15.5 0V78M27.5 0V78M39.5 0V78M51.5 0V78M63.5 0V78M75.5 0V78M87.5 0V78M99.5 0V78M111.5 0V78M123.5 0V78M135.5 0V78M147.5 0V78M159.5 0V78M171.5 0V78M183.5 0V78M195.5 0V78M207.5 0V78M219.5 0V78M231.5 0V78M243.5 0V78M255.5 0V78M267.5 0V78M0 13.5H270M0 25.5H270M0 37.5H270M0 49.5H270M0 61.5H270M0 73.5H270" stroke="#008040" stroke-width="1" fill="none"/><path d="M28.5 60 H270" stroke="#1e84f0" stroke-width="2.2"/></svg>
<div style="left:1073px;top:727px;width:270px;height:2px;background:#7a7a7a"></div>
<div style="left:1073px;top:727px;width:2px;height:78px;background:#7a7a7a"></div>
<div style="left:940px;top:833px;width:198px;height:87px;border:1px solid #d5dfe5;border-radius:3px"></div>
<div style="left:946.5px;top:831px;width:131.2px;height:5px;background:#fff"></div>
<span class="t" style="left:949.5px;top:827.89px;font-size:12.3px;color:#000;transform:scaleX(1.0122);transform-origin:0 0;">Physical Memory (MB)</span>
<span class="t" style="left:951.6px;top:847.83px;font-size:12.6px;color:#000;transform:scaleX(1.0670);transform-origin:0 0;">Total</span>
<span class="t" style="right:800.7px;top:847.83px;font-size:12.6px;color:#000;transform:scaleX(0.9703);transform-origin:100% 0;">32719</span>
<span class="t" style="left:951.6px;top:865.83px;font-size:12.6px;color:#000;transform:scaleX(0.9440);transform-origin:0 0;">Cached</span>
<span class="t" style="right:800.7px;top:865.83px;font-size:12.6px;color:#000;transform:scaleX(0.9561);transform-origin:100% 0;">6096</span>
<span class="t" style="left:951.6px;top:883.73px;font-size:12.6px;color:#000;transform:scaleX(0.9763);transform-origin:0 0;">Available</span>
<span class="t" style="right:800.7px;top:883.73px;font-size:12.6px;color:#000;transform:scaleX(0.9818);transform-origin:100% 0;">24817</span>
<span class="t" style="left:951.6px;top:901.53px;font-size:12.6px;color:#000;transform:scaleX(0.9572);transform-origin:0 0;">Free</span>
<span class="t" style="right:800.7px;top:901.53px;font-size:12.6px;color:#000;transform:scaleX(0.9703);transform-origin:100% 0;">19610</span>
<div style="left:940px;top:939px;width:198px;height:51px;border:1px solid #d5dfe5;border-radius:3px"></div>
<div style="left:946.5px;top:937px;width:122.2px;height:5px;background:#fff"></div>
<span class="t" style="left:949.5px;top:933.69px;font-size:12.3px;color:#000;transform:scaleX(1.0242);transform-origin:0 0;">Kernel Memory (MB)</span>
<span class="t" style="left:951.6px;top:954.03px;font-size:12.6px;color:#000;transform:scaleX(0.9332);transform-origin:0 0;">Paged</span>
<span class="t" style="right:799.5999999999999px;top:954.03px;font-size:12.6px;color:#000;transform:scaleX(0.9513);transform-origin:100% 0;">315</span>
<span class="t" style="left:951.6px;top:971.63px;font-size:12.6px;color:#000;transform:scaleX(0.9578);transform-origin:0 0;">Nonpaged</span>
<span class="t" style="right:799.5999999999999px;top:971.63px;font-size:12.6px;color:#000;transform:scaleX(0.9513);transform-origin:100% 0;">157</span>
<div style="left:1154px;top:833px;width:200px;height:109px;border:1px solid #d5dfe5;border-radius:3px"></div>
<div style="left:1160.9px;top:831px;width:46.6px;height:5px;background:#fff"></div>
<span class="t" style="left:1163.9px;top:827.89px;font-size:12.3px;color:#000;transform:scaleX(0.9901);transform-origin:0 0;">System</span>
<span class="t" style="left:1164.5px;top:847.83px;font-size:12.6px;color:#000;transform:scaleX(0.9669);transform-origin:0 0;">Handles</span>
<span class="t" style="right:584.5999999999999px;top:847.83px;font-size:12.6px;color:#000;transform:scaleX(0.9789);transform-origin:100% 0;">61854</span>
<span class="t" style="left:1164.5px;top:865.83px;font-size:12.6px;color:#000;transform-origin:0 0;">Threads</span>
<span class="t" style="right:584.5999999999999px;top:865.83px;font-size:12.6px;color:#000;transform:scaleX(0.9703);transform-origin:100% 0;">2504</span>
<span class="t" style="left:1164.5px;top:883.73px;font-size:12.6px;color:#000;transform:scaleX(0.9605);transform-origin:0 0;">Processes</span>
<span class="t" style="right:584.5999999999999px;top:883.73px;font-size:12.6px;color:#000;transform:scaleX(0.9513);transform-origin:100% 0;">158</span>
<span class="t" style="left:1164.5px;top:901.53px;font-size:12.6px;color:#000;transform-origin:0 0;">Up Time</span>
<span class="t" style="right:584.5999999999999px;top:901.53px;font-size:12.6px;color:#000;transform:scaleX(1.0528);transform-origin:100% 0;">0:01:13:59</span>
<span class="t" style="left:1164.5px;top:919.53px;font-size:12.6px;color:#000;transform:scaleX(0.9837);transform-origin:0 0;">Commit (GB)</span>
<span class="t" style="right:584.5999999999999px;top:919.53px;font-size:12.6px;color:#000;transform:scaleX(1.0458);transform-origin:100% 0;">10 / 63</span>
<div style="left:1155px;top:962px;width:198px;height:26px;border:1px solid #707070;border-radius:3px;background:linear-gradient(180deg,#f2f2f2 0,#ebebeb 50%,#dddddd 51%,#cfcfcf 100%);box-shadow:inset 0 0 0 1px #fafafa"></div>
<svg style="position:absolute;left:1188px;top:964px;" width="17" height="20" viewBox="0 0 17 20"><path d="M8.5 1 C5.5 2.5 3 3 1.2 3 C1.2 11 3.5 15.5 8.5 18.8 C13.5 15.5 15.8 11 15.8 3 C14 3 11.5 2.5 8.5 1 Z" fill="#2a6ec0" stroke="#8a8a8a" stroke-width=".8"/><path d="M8.5 1.5 V10 H15.5 C15.6 6 15.6 4.5 15.6 3.3 C13.5 3.2 11.2 2.6 8.5 1.5 Z" fill="#f2c500"/><path d="M8.5 10 V18.2 C4.5 15.5 2.3 12.5 1.7 10 Z" fill="#f2c500"/></svg>
<span class="t" style="left:1208.4px;top:968.00px;font-size:14.3px;color:#000;transform:scaleX(0.8953);transform-origin:0 0;">Resource Monitor...</span>
<div style="left:917px;top:1017px;width:462px;height:1px;background:#a0a0a0"></div>
<div style="left:917px;top:1018px;width:462px;height:1px;background:#fff"></div>
<div style="left:917px;top:1019px;width:462px;height:26px;background:#f0eded"></div>
<div style="left:1048px;top:1019px;width:1px;height:25px;background:#c8c5c5"></div>
<div style="left:1213px;top:1019px;width:1px;height:25px;background:#c8c5c5"></div>
<span class="t" style="left:919.5px;top:1026.13px;font-size:14.5px;color:#000;transform:scaleX(0.9305);transform-origin:0 0;">Processes: 158</span>
<span class="t" style="left:1053.2px;top:1026.13px;font-size:14.5px;color:#000;transform:scaleX(0.9359);transform-origin:0 0;">CPU Usage: 9%</span>
<div style="left:1217px;top:1019px;width:142px;height:25px;overflow:hidden"><span class="t" style="left:0.6px;top:6.43px;font-size:14.5px;color:#000;transform:scaleX(0.9925);transform-origin:0 0">Physical Memory: 24%</span></div>
<svg style="position:absolute;left:1364px;top:1031px;" width="14" height="13" viewBox="0 0 14 13"><g fill="#b8b8b8"><rect x="9" y="1" width="2" height="2"/><rect x="5" y="5" width="2" height="2"/><rect x="9" y="5" width="2" height="2"/><rect x="1" y="9" width="2" height="2"/><rect x="5" y="9" width="2" height="2"/><rect x="9" y="9" width="2" height="2"/></g></svg>
<div style="left:1389px;top:402px;width:530px;height:667px;border:1px solid #d4d6d8;border-radius:7px 7px 6px 6px;background:linear-gradient(180deg,#65686c 0px,#65686c 168px,#11151b 186px,#11151b 100%)"></div>
<div style="left:1390px;top:403px;width:528px;height:34px;border-radius:6px 6px 0 0;background:linear-gradient(90deg,#6d7074 0px,#65686c 60px,#3a3d40 210px,#0b0d11 45%,#0c0e12 62%,#3c3f44 78%,#66696d 100%)"></div>
<div style="left:1390px;top:403px;width:528px;height:34px;border-radius:6px 6px 0 0;background:linear-gradient(180deg,rgba(255,255,255,.07) 0px,rgba(0,0,0,0) 14px,rgba(0,0,0,0) 100%)"></div>
<div style="left:1395px;top:436px;width:518px;height:627px;border:1px solid #a3a6a9;border-top-color:#909396;border-radius:3px 3px 2px 2px"></div>
<div style="left:1396px;top:437px;width:516px;height:625px;border:1px solid #15181b;border-top:none;background:#f0f0f0"></div>
<div style="left:1411px;top:407px;width:209px;height:25px;border-radius:12px;background:rgba(225,225,225,.62);filter:blur(7px)"></div>
<div style="left:1411px;top:411px;width:195px;height:17px;border-radius:8px;background:rgba(235,235,235,.55);filter:blur(4px)"></div>
<div style="left:1397px;top:437px;width:1px;height:624px;background:#fff"></div>
<div style="left:1397px;top:437px;width:514px;height:1px;background:#fff"></div>
<svg style="position:absolute;left:1397px;top:409px;" width="22" height="20" viewBox="0 0 22 20"><path d="M2.5 1.5 H4 V18" fill="none" stroke="#e8e8e8" stroke-width="1.3"/><path d="M4.5 3.5 H19.5 V15 H13 V17.5 H4.5 Z" fill="#62b84a" stroke="#3f8a2c" stroke-width=".7"/><rect x="8.5" y="7.5" width="4.5" height="4.5" fill="#d0d0d0" stroke="#777" stroke-width=".5"/><rect x="15" y="5" width="3.5" height="1.6" fill="#eee"/><rect x="15" y="9" width="3.5" height="1.6" fill="#eee"/><rect x="5" y="4" width="2" height="1.5" fill="#d33"/><path d="M5 15.5 H12" stroke="#c8d838" stroke-width="1.4"/></svg>
<span class="t" style="left:1422.3px;top:412.43px;font-size:14.5px;color:#000;transform:scaleX(0.9742);transform-origin:0 0;">TechPowerUp GPU-Z 2.27.0</span>
<div style="left:1783px;top:402px;width:129px;height:25px;border:1px solid rgba(200,203,206,.85);border-top:none;border-radius:0 0 5px 5px;overflow:hidden;background:linear-gradient(180deg,#b6b9bc 0,#8e9296 35%,#4a4e54 50%,#3e434a 75%,#5a6070 100%)"></div>
<div style="left:1852px;top:402px;width:60px;height:25px;border:1px solid rgba(200,203,206,.85);border-top:none;border-left:none;border-radius:0 0 5px 0;background:linear-gradient(180deg,#dd968a 0,#cf6c58 40%,#b8341c 52%,#c23d22 75%,#d86040 100%)"></div>
<div style="left:1819px;top:402px;width:1px;height:24px;background:rgba(210,213,216,.9)"></div>
<div style="left:1852px;top:402px;width:1px;height:24px;background:rgba(210,213,216,.9)"></div>
<div style="left:1795px;top:416px;width:15px;height:4px;background:#fafafa;box-shadow:0 0 1px #222"></div>
<div style="left:1827px;top:407px;width:17px;height:13px;border:3px solid rgba(200,200,200,.55);background:rgba(80,84,90,.4)"></div>
<svg style="position:absolute;left:1875px;top:407px;" width="16" height="15" viewBox="0 0 16 15"><path d="M0.5 0.5 H4.8 L7.2 4.3 L9.6 0.5 H13.9 L9.5 6.4 L13.9 12.5 H9.6 L7.2 8.5 L4.8 12.5 H0.5 L4.9 6.4 Z" fill="#f6f6f6" stroke="#4a5570" stroke-width="1"/></svg>
<div style="left:1403px;top:466px;width:502px;height:557px;border:1px solid #8d9099;background:#f0f0f0;box-shadow:inset 1px 1px 0 #fff"></div>
<div style="left:1405px;top:445px;width:97px;height:22px;border:1px solid #8d9099;border-bottom:none;background:linear-gradient(180deg,#f4f4f4 0,#ececec 50%,#dcdcdc 51%,#d6d6d6 100%)"></div>
<span class="t" style="left:1411.1px;top:448.73px;font-size:14.5px;color:#000;transform:scaleX(0.9168);transform-origin:0 0;">Graphics Card</span>
<div style="left:1566px;top:445px;width:73px;height:22px;border:1px solid #8d9099;border-bottom:none;background:linear-gradient(180deg,#f4f4f4 0,#ececec 50%,#dcdcdc 51%,#d6d6d6 100%)"></div>
<span class="t" style="left:1571px;top:448.73px;font-size:14.5px;color:#000;transform:scaleX(0.9583);transform-origin:0 0;">Advanced</span>
<div style="left:1639px;top:445px;width:70px;height:22px;border:1px solid #8d9099;border-bottom:none;background:linear-gradient(180deg,#f4f4f4 0,#ececec 50%,#dcdcdc 51%,#d6d6d6 100%)"></div>
<span class="t" style="left:1644.8px;top:448.73px;font-size:14.5px;color:#000;transform:scaleX(0.9567);transform-origin:0 0;">Validation</span>
<div style="left:1501px;top:443px;width:66px;height:25px;border:1px solid #8d9099;border-bottom:none;background:#fff"></div>
<span class="t" style="left:1509.2px;top:446.73px;font-size:14.5px;color:#000;transform:scaleX(0.9212);transform-origin:0 0;">Sensors</span>
<svg style="position:absolute;left:1811px;top:444px;" width="18" height="13" viewBox="0 0 18 13"><path d="M1 3.5 H5 L6.5 1.5 H11.5 L13 3.5 H17 V12 H1 Z" fill="#4a4a4a"/><circle cx="9" cy="7.6" r="3.2" fill="#4a4a4a" stroke="#a0a0a0" stroke-width="1"/></svg>
<svg style="position:absolute;left:1847px;top:444px;" width="16" height="14" viewBox="0 0 16 14"><path d="M12.5 5 A5 5 0 0 0 3.2 4.5" fill="none" stroke="#111" stroke-width="2"/><path d="M1 2 L5.5 6.5 L1.5 6.8 Z" fill="#111"/><path d="M3.5 9 A5 5 0 0 0 12.8 9.5" fill="none" stroke="#111" stroke-width="2"/><path d="M15 12 L10.5 7.5 L14.5 7.2 Z" fill="#111"/></svg>
<div style="left:1882px;top:446px;width:13px;height:2px;background:#1a1a1a"></div>
<div style="left:1882px;top:450px;width:13px;height:2px;background:#1a1a1a"></div>
<div style="left:1882px;top:454px;width:13px;height:2px;background:#1a1a1a"></div>
<div style="left:1413px;top:478px;width:185px;height:25px;border-top:1px solid #a0a0a0;border-left:1px solid #a0a0a0;border-bottom:1px solid #fff;border-right:1px solid #fff;background:#f0f0f0"></div>
<span class="t" style="left:1417.6px;top:483.93px;font-size:13.2px;color:#000;transform-origin:0 0;">GPU Clock</span>
<svg style="position:absolute;left:1579px;top:488px;" width="10" height="6" viewBox="0 0 10 6"><path d="M0 0 H9.5 L4.75 5.5 Z" fill="#000"/></svg>
<div style="left:1604px;top:478px;width:88px;height:25px;border-top:1px solid #a0a0a0;border-left:1px solid #a0a0a0;border-bottom:1px solid #fff;border-right:1px solid #fff;background:#f0f0f0"></div>
<span class="t" style="right:238px;top:483.83px;font-size:13.2px;color:#000;transform:scaleX(0.9557);transform-origin:100% 0;">400.0 MHz</span>
<div style="left:1698px;top:478px;width:200px;height:25px;border-top:1px solid #a0a0a0;border-left:1px solid #a0a0a0;border-bottom:1px solid #fff;border-right:1px solid #fff;background:#f0f0f0"></div>
<div style="left:1772px;top:501px;width:125px;height:1px;background:#f00"></div>
<div style="left:1827px;top:487px;width:6px;height:15px;background:#f00"></div>
<div style="left:1845px;top:487px;width:6px;height:15px;background:#f00"></div>
<div style="left:1413px;top:512px;width:185px;height:25px;border-top:1px solid #a0a0a0;border-left:1px solid #a0a0a0;border-bottom:1px solid #fff;border-right:1px solid #fff;background:#f0f0f0"></div>
<span class="t" style="left:1417.6px;top:517.93px;font-size:13.2px;color:#000;transform:scaleX(1.0113);transform-origin:0 0;">Memory Clock</span>
<svg style="position:absolute;left:1579px;top:522px;" width="10" height="6" viewBox="0 0 10 6"><path d="M0 0 H9.5 L4.75 5.5 Z" fill="#000"/></svg>
<div style="left:1604px;top:512px;width:88px;height:25px;border-top:1px solid #a0a0a0;border-left:1px solid #a0a0a0;border-bottom:1px solid #fff;border-right:1px solid #fff;background:#f0f0f0"></div>
<span class="t" style="right:238px;top:517.83px;font-size:13.2px;color:#000;transform:scaleX(0.9456);transform-origin:100% 0;">1400.0 MHz</span>
<div style="left:1698px;top:512px;width:200px;height:25px;border-top:1px solid #a0a0a0;border-left:1px solid #a0a0a0;border-bottom:1px solid #fff;border-right:1px solid #fff;background:#f0f0f0"></div>
<div style="left:1772px;top:522px;width:125px;height:14px;background:#f00"></div>
<div style="left:1413px;top:546px;width:185px;height:25px;border-top:1px solid #a0a0a0;border-left:1px solid #a0a0a0;border-bottom:1px solid #fff;border-right:1px solid #fff;background:#f0f0f0"></div>
<span class="t" style="left:1417.6px;top:551.93px;font-size:13.2px;color:#000;transform:scaleX(1.0270);transform-origin:0 0;">GPU Temperature</span>
<svg style="position:absolute;left:1579px;top:556px;" width="10" height="6" viewBox="0 0 10 6"><path d="M0 0 H9.5 L4.75 5.5 Z" fill="#000"/></svg>
<div style="left:1604px;top:546px;width:88px;height:25px;border-top:1px solid #a0a0a0;border-left:1px solid #a0a0a0;border-bottom:1px solid #fff;border-right:1px solid #fff;background:#f0f0f0"></div>
<span class="t" style="right:238px;top:551.83px;font-size:13.2px;color:#000;transform:scaleX(0.9101);transform-origin:100% 0;">64.0 °C</span>
<div style="left:1698px;top:546px;width:200px;height:25px;border-top:1px solid #a0a0a0;border-left:1px solid #a0a0a0;border-bottom:1px solid #fff;border-right:1px solid #fff;background:#f0f0f0"></div>
<div style="left:1772px;top:553px;width:125px;height:17px;background:#f00"></div>
<div style="left:1826px;top:552px;width:71px;height:2px;background:#f00"></div>
<div style="left:1413px;top:579px;width:185px;height:25px;border-top:1px solid #a0a0a0;border-left:1px solid #a0a0a0;border-bottom:1px solid #fff;border-right:1px solid #fff;background:#f0f0f0"></div>
<span class="t" style="left:1417.6px;top:584.93px;font-size:13.2px;color:#000;transform:scaleX(1.0036);transform-origin:0 0;">Fan Speed (%)</span>
<svg style="position:absolute;left:1579px;top:589px;" width="10" height="6" viewBox="0 0 10 6"><path d="M0 0 H9.5 L4.75 5.5 Z" fill="#000"/></svg>
<div style="left:1604px;top:579px;width:88px;height:25px;border-top:1px solid #a0a0a0;border-left:1px solid #a0a0a0;border-bottom:1px solid #fff;border-right:1px solid #fff;background:#f0f0f0"></div>
<span class="t" style="right:238px;top:584.83px;font-size:13.2px;color:#000;transform:scaleX(0.9639);transform-origin:100% 0;">39 %</span>
<div style="left:1698px;top:579px;width:200px;height:25px;border-top:1px solid #a0a0a0;border-left:1px solid #a0a0a0;border-bottom:1px solid #fff;border-right:1px solid #fff;background:#f0f0f0"></div>
<div style="left:1772px;top:594px;width:125px;height:9px;background:#f00"></div>
<div style="left:1413px;top:613px;width:185px;height:25px;border-top:1px solid #a0a0a0;border-left:1px solid #a0a0a0;border-bottom:1px solid #fff;border-right:1px solid #fff;background:#f0f0f0"></div>
<span class="t" style="left:1417.6px;top:618.93px;font-size:13.2px;color:#000;transform:scaleX(1.0059);transform-origin:0 0;">Fan Speed (RPM)</span>
<svg style="position:absolute;left:1579px;top:623px;" width="10" height="6" viewBox="0 0 10 6"><path d="M0 0 H9.5 L4.75 5.5 Z" fill="#000"/></svg>
<div style="left:1604px;top:613px;width:88px;height:25px;border-top:1px solid #a0a0a0;border-left:1px solid #a0a0a0;border-bottom:1px solid #fff;border-right:1px solid #fff;background:#f0f0f0"></div>
<span class="t" style="right:238px;top:618.83px;font-size:13.2px;color:#000;transform:scaleX(0.9781);transform-origin:100% 0;">1460 RPM</span>
<div style="left:1698px;top:613px;width:200px;height:25px;border-top:1px solid #a0a0a0;border-left:1px solid #a0a0a0;border-bottom:1px solid #fff;border-right:1px solid #fff;background:#f0f0f0"></div>
<div style="left:1772px;top:626px;width:125px;height:11px;background:#f00"></div>
<div style="left:1413px;top:647px;width:185px;height:25px;border-top:1px solid #a0a0a0;border-left:1px solid #a0a0a0;border-bottom:1px solid #fff;border-right:1px solid #fff;background:#f0f0f0"></div>
<span class="t" style="left:1417.6px;top:652.93px;font-size:13.2px;color:#000;transform:scaleX(1.0156);transform-origin:0 0;">GPU Load</span>
<svg style="position:absolute;left:1579px;top:657px;" width="10" height="6" viewBox="0 0 10 6"><path d="M0 0 H9.5 L4.75 5.5 Z" fill="#000"/></svg>
<div style="left:1604px;top:647px;width:88px;height:25px;border-top:1px solid #a0a0a0;border-left:1px solid #a0a0a0;border-bottom:1px solid #fff;border-right:1px solid #fff;background:#f0f0f0"></div>
<span class="t" style="right:238px;top:652.83px;font-size:13.2px;color:#000;transform:scaleX(0.9672);transform-origin:100% 0;">1 %</span>
<div style="left:1698px;top:647px;width:200px;height:25px;border-top:1px solid #a0a0a0;border-left:1px solid #a0a0a0;border-bottom:1px solid #fff;border-right:1px solid #fff;background:#f0f0f0"></div>
<div style="left:1827px;top:666px;width:6px;height:5px;background:#f00"></div>
<div style="left:1845px;top:666px;width:6px;height:5px;background:#f00"></div>
<div style="left:1413px;top:681px;width:185px;height:25px;border-top:1px solid #a0a0a0;border-left:1px solid #a0a0a0;border-bottom:1px solid #fff;border-right:1px solid #fff;background:#f0f0f0"></div>
<span class="t" style="left:1417.6px;top:686.93px;font-size:13.2px;color:#000;transform:scaleX(1.0302);transform-origin:0 0;">Memory Used (Dedicated)</span>
<svg style="position:absolute;left:1579px;top:691px;" width="10" height="6" viewBox="0 0 10 6"><path d="M0 0 H9.5 L4.75 5.5 Z" fill="#000"/></svg>
<div style="left:1604px;top:681px;width:88px;height:25px;border-top:1px solid #a0a0a0;border-left:1px solid #a0a0a0;border-bottom:1px solid #fff;border-right:1px solid #fff;background:#f0f0f0"></div>
<span class="t" style="right:238px;top:686.83px;font-size:13.2px;color:#000;transform:scaleX(0.9716);transform-origin:100% 0;">646 MB</span>
<div style="left:1698px;top:681px;width:200px;height:25px;border-top:1px solid #a0a0a0;border-left:1px solid #a0a0a0;border-bottom:1px solid #fff;border-right:1px solid #fff;background:#f0f0f0"></div>
<div style="left:1772px;top:698px;width:125px;height:7px;background:#f00"></div>
<div style="left:1413px;top:715px;width:185px;height:25px;border-top:1px solid #a0a0a0;border-left:1px solid #a0a0a0;border-bottom:1px solid #fff;border-right:1px solid #fff;background:#f0f0f0"></div>
<span class="t" style="left:1417.6px;top:720.93px;font-size:13.2px;color:#000;transform:scaleX(1.0174);transform-origin:0 0;">Memory Used (Dynamic)</span>
<svg style="position:absolute;left:1579px;top:725px;" width="10" height="6" viewBox="0 0 10 6"><path d="M0 0 H9.5 L4.75 5.5 Z" fill="#000"/></svg>
<div style="left:1604px;top:715px;width:88px;height:25px;border-top:1px solid #a0a0a0;border-left:1px solid #a0a0a0;border-bottom:1px solid #fff;border-right:1px solid #fff;background:#f0f0f0"></div>
<span class="t" style="right:238px;top:720.83px;font-size:13.2px;color:#000;transform:scaleX(0.9672);transform-origin:100% 0;">179 MB</span>
<div style="left:1698px;top:715px;width:200px;height:25px;border-top:1px solid #a0a0a0;border-left:1px solid #a0a0a0;border-bottom:1px solid #fff;border-right:1px solid #fff;background:#f0f0f0"></div>
<div style="left:1772px;top:736px;width:125px;height:3px;background:#f00"></div>
<div style="left:1833px;top:735px;width:60px;height:2px;background:#f00"></div>
<div style="left:1413px;top:748px;width:185px;height:25px;border-top:1px solid #a0a0a0;border-left:1px solid #a0a0a0;border-bottom:1px solid #fff;border-right:1px solid #fff;background:#f0f0f0"></div>
<span class="t" style="left:1417.6px;top:753.93px;font-size:13.2px;color:#000;transform:scaleX(1.0106);transform-origin:0 0;">VDDC</span>
<svg style="position:absolute;left:1579px;top:758px;" width="10" height="6" viewBox="0 0 10 6"><path d="M0 0 H9.5 L4.75 5.5 Z" fill="#000"/></svg>
<div style="left:1604px;top:748px;width:88px;height:25px;border-top:1px solid #a0a0a0;border-left:1px solid #a0a0a0;border-bottom:1px solid #fff;border-right:1px solid #fff;background:#f0f0f0"></div>
<span class="t" style="right:238px;top:753.83px;font-size:13.2px;color:#000;transform:scaleX(0.9450);transform-origin:100% 0;">0.950 V</span>
<div style="left:1698px;top:748px;width:200px;height:25px;border-top:1px solid #a0a0a0;border-left:1px solid #a0a0a0;border-bottom:1px solid #fff;border-right:1px solid #fff;background:#f0f0f0"></div>
<div style="left:1772px;top:764px;width:125px;height:8px;background:#f00"></div>
<div style="left:1827px;top:751px;width:7px;height:21px;background:#f00"></div>
<div style="left:1845px;top:751px;width:6px;height:21px;background:#f00"></div>
<div style="left:1413px;top:782px;width:185px;height:25px;border-top:1px solid #a0a0a0;border-left:1px solid #a0a0a0;border-bottom:1px solid #fff;border-right:1px solid #fff;background:#f0f0f0"></div>
<span class="t" style="left:1417.6px;top:787.93px;font-size:13.2px;color:#000;transform:scaleX(1.0284);transform-origin:0 0;">CPU Temperature</span>
<svg style="position:absolute;left:1579px;top:792px;" width="10" height="6" viewBox="0 0 10 6"><path d="M0 0 H9.5 L4.75 5.5 Z" fill="#000"/></svg>
<div style="left:1604px;top:782px;width:88px;height:25px;border-top:1px solid #a0a0a0;border-left:1px solid #a0a0a0;border-bottom:1px solid #fff;border-right:1px solid #fff;background:#f0f0f0"></div>
<span class="t" style="right:238px;top:787.83px;font-size:13.2px;color:#000;transform:scaleX(0.8988);transform-origin:100% 0;">38.0 °C</span>
<div style="left:1698px;top:782px;width:200px;height:25px;border-top:1px solid #a0a0a0;border-left:1px solid #a0a0a0;border-bottom:1px solid #fff;border-right:1px solid #fff;background:#f0f0f0"></div>
<div style="left:1772px;top:803px;width:125px;height:3px;background:#f00"></div>
<div style="left:1827px;top:801px;width:1px;height:2px;background:#f00"></div>
<div style="left:1845px;top:801px;width:2px;height:2px;background:#f00"></div>
<div style="left:1413px;top:816px;width:185px;height:25px;border-top:1px solid #a0a0a0;border-left:1px solid #a0a0a0;border-bottom:1px solid #fff;border-right:1px solid #fff;background:#f0f0f0"></div>
<span class="t" style="left:1417.6px;top:821.93px;font-size:13.2px;color:#000;transform:scaleX(1.0213);transform-origin:0 0;">System Memory Used</span>
<svg style="position:absolute;left:1579px;top:826px;" width="10" height="6" viewBox="0 0 10 6"><path d="M0 0 H9.5 L4.75 5.5 Z" fill="#000"/></svg>
<div style="left:1604px;top:816px;width:88px;height:25px;border-top:1px solid #a0a0a0;border-left:1px solid #a0a0a0;border-bottom:1px solid #fff;border-right:1px solid #fff;background:#f0f0f0"></div>
<span class="t" style="right:238px;top:821.83px;font-size:13.2px;color:#000;transform:scaleX(0.9577);transform-origin:100% 0;">7991 MB</span>
<div style="left:1698px;top:816px;width:200px;height:25px;border-top:1px solid #a0a0a0;border-left:1px solid #a0a0a0;border-bottom:1px solid #fff;border-right:1px solid #fff;background:#f0f0f0"></div>
<div style="left:1772px;top:834px;width:125px;height:6px;background:#f00"></div>
<div style="left:1414px;top:995px;width:16px;height:16px;border:1px solid #8f8f8f;background:linear-gradient(135deg,#c9ccd2 0,#eef0f2 70%,#f8f8f8 100%);box-shadow:inset 0 0 0 1px #f4f4f4"></div>
<span class="t" style="left:1433.6px;top:996.73px;font-size:13.2px;color:#000;transform:scaleX(0.9783);transform-origin:0 0;">Log to file</span>
<div style="left:1835px;top:990px;width:63px;height:24px;border:1px solid #707070;border-radius:3px;background:linear-gradient(180deg,#f2f2f2 0,#ebebeb 50%,#dddddd 51%,#cfcfcf 100%);box-shadow:inset 0 0 0 1px #fcfcfc"></div>
<span class="t" style="left:1848.3px;top:995.83px;font-size:13.2px;color:#000;transform:scaleX(1.0585);transform-origin:0 0;">Reset</span>
<div style="left:1403px;top:1029px;width:288px;height:24px;border:1px solid #707070;border-radius:3px;background:linear-gradient(180deg,#f2f2f2 0,#ebebeb 50%,#dddddd 51%,#cfcfcf 100%);box-shadow:inset 0 0 0 1px #fcfcfc"></div>
<span class="t" style="left:1407px;top:1035.03px;font-size:13.2px;color:#000;transform-origin:0 0;">AMD Radeon (TM) R9 200 Series</span>
<svg style="position:absolute;left:1675px;top:1038px;" width="11" height="6" viewBox="0 0 11 6"><path d="M0 0 H10.5 L5.25 5.5 Z" fill="#000"/></svg>
<div style="left:1807px;top:1029px;width:98px;height:26px;border:1px solid #3c7fb1;border-radius:3px;background:linear-gradient(180deg,#f2f2f2 0,#ebebeb 50%,#dddddd 51%,#cfcfcf 100%);box-shadow:inset 0 0 0 1px #48d8fb,inset 0 0 0 2px #f8f8f8"></div>
<span class="t" style="left:1838.4px;top:1035.93px;font-size:13.2px;color:#000;transform:scaleX(1.0134);transform-origin:0 0;">Close</span></body></html>
